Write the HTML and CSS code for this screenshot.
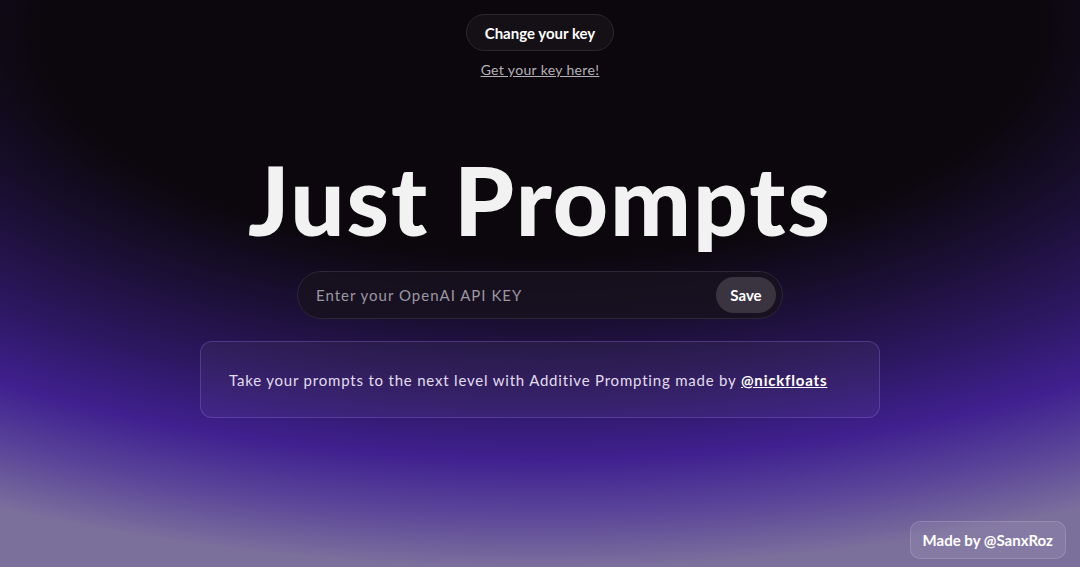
FILE: index.html
```html
<!DOCTYPE html>
<html lang="en">
<head>
    <meta charset="UTF-8">
    <meta name="viewport" content="width=device-width, initial-scale=1.0">
    <title>Just Prompts</title>
    <link rel="stylesheet" href="styles.css">
</head>
<body>
    <div class="page">
        <header class="key-header">
            <button class="change-key">Change your key</button>
            <a href="#" class="get-key">Get your key here!</a>
        </header>

        <main class="hero">
            <h1 class="title">Just Prompts</h1>

            <form class="key-form" onsubmit="return false;">
                <input type="text" class="key-input" placeholder="Enter your OpenAI API KEY">
                <button type="submit" class="save-btn">Save</button>
            </form>

            <div class="info-card">
                <p>Take your prompts to the next level with Additive Prompting made by <a href="#" class="author">@nickfloats</a></p>
            </div>
        </main>

        <a href="#" class="made-by">Made by @SanxRoz</a>
    </div>
</body>
</html>
```

FILE: styles.css
```css
body, html {
    margin: 0;
    padding: 0;
    height: 100%;
    font-family: Lato, "Noto Sans", sans-serif;
    color: #ffffff;
}

body {
    background-color: #0b070c;
    background-image: radial-gradient(ellipse 110% 95% at 50% 5%, #0b070c 0%, #0b070c 42%, #1a0f33 55%, #2c1760 68%, #40208f 80%, #5a4599 90%, #7b6f9c 100%);
}

.page {
    min-height: 100vh;
    display: flex;
    flex-direction: column;
    align-items: center;
    position: relative;
    box-sizing: border-box;
    padding-top: 14px;
}

.key-header {
    display: flex;
    flex-direction: column;
    align-items: center;
    gap: 10px;
}

.change-key {
    font-family: inherit;
    font-size: 15px;
    font-weight: 700;
    color: #ffffff;
    background-color: #141016;
    border: 1px solid #2b272e;
    border-radius: 19px;
    height: 37px;
    padding: 0 18px;
    cursor: pointer;
}

.get-key {
    font-size: 14px;
    letter-spacing: 0.35px;
    color: #b4b0b8;
    text-decoration: underline;
}

.hero {
    display: flex;
    flex-direction: column;
    align-items: center;
    margin-top: 73px;
}

.title {
    font-size: 96px;
    font-weight: 900;
    line-height: 1;
    margin: 0;
    color: #f2f2f2;
    letter-spacing: 2px;
}

.key-form {
    display: flex;
    align-items: center;
    box-sizing: border-box;
    width: 486px;
    height: 48px;
    margin-top: 24px;
    padding: 0 6px 0 16px;
    background-color: rgba(24, 18, 30, 0.85);
    border: 1px solid #2c2734;
    border-radius: 24px;
}

.key-input {
    flex: 1;
    font-family: inherit;
    font-size: 15px;
    letter-spacing: 1px;
    color: #ffffff;
    background: transparent;
    border: none;
    outline: none;
}

.key-input::placeholder {
    color: #9c97a3;
}

.save-btn {
    font-family: inherit;
    font-size: 15px;
    font-weight: 700;
    color: #ffffff;
    background-color: #3a3441;
    border: none;
    border-radius: 18px;
    height: 36px;
    width: 60px;
    cursor: pointer;
}

.info-card {
    box-sizing: border-box;
    width: 680px;
    height: 77px;
    margin-top: 22px;
    padding: 0 28px;
    display: flex;
    align-items: center;
    background-color: rgba(255, 255, 255, 0.04);
    border: 1px solid rgba(140, 110, 220, 0.35);
    border-radius: 12px;
}

.info-card p {
    margin: 0;
    font-size: 15px;
    letter-spacing: 0.8px;
    color: #e2dded;
}

.author {
    color: #ffffff;
    font-weight: 700;
    text-decoration: underline;
}

.made-by {
    position: absolute;
    right: 14px;
    bottom: 8px;
    font-size: 15px;
    font-weight: 700;
    color: #ffffff;
    text-decoration: none;
    padding: 9px 12px;
    background-color: rgba(255, 255, 255, 0.08);
    border: 1px solid rgba(255, 255, 255, 0.14);
    border-radius: 10px;
}
```
